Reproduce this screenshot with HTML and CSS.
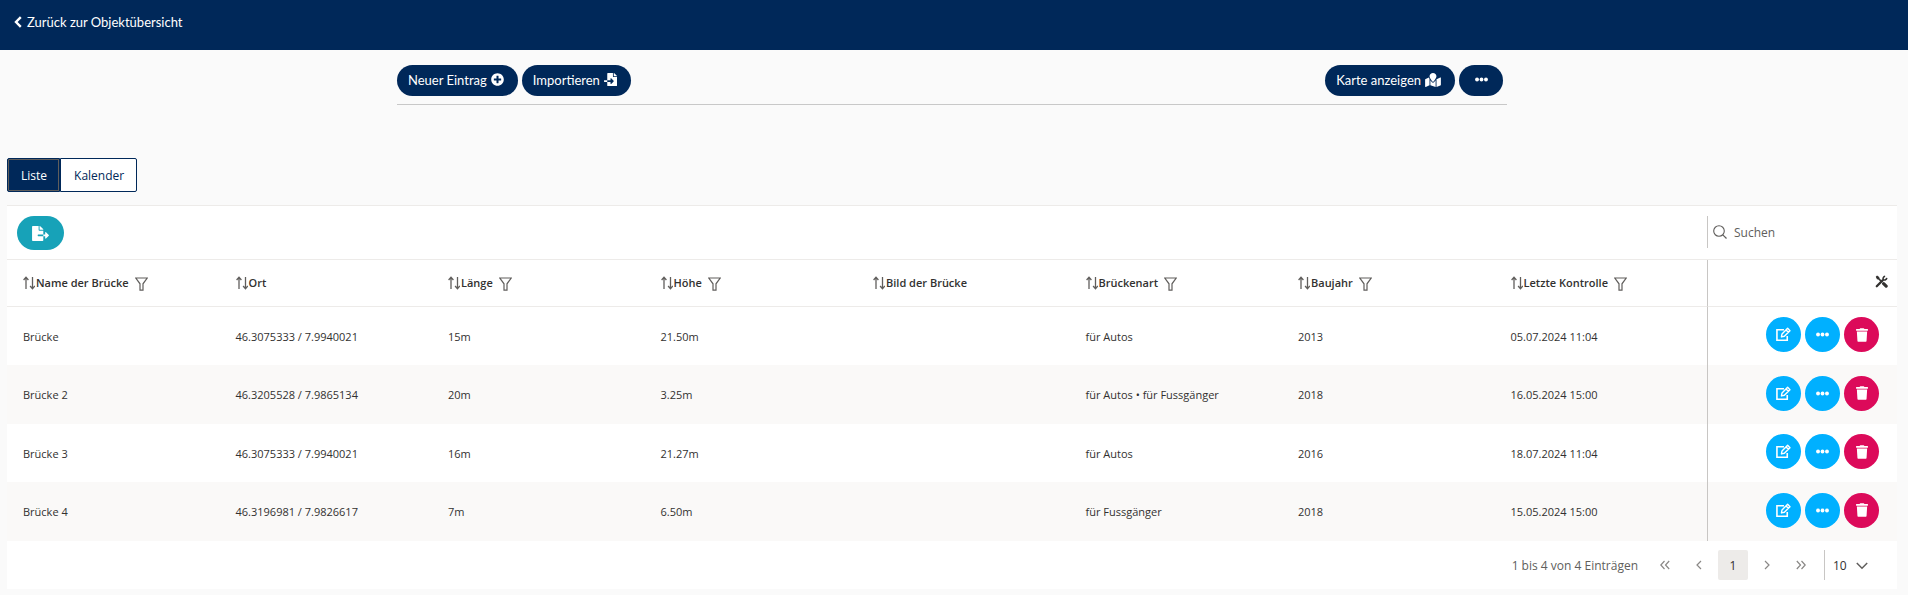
FILE: index.html
```html
<!DOCTYPE html>
<html lang="de">
<head>
<meta charset="utf-8">
<meta name="viewport" content="width=device-width, initial-scale=1">
<title>Brücken</title>
<link rel="stylesheet" href="styles.css">
</head>
<body>
<svg class="sprite" aria-hidden="true">
  <symbol id="i-back" viewBox="0 0 8 12"><path d="M6.8 1.2 2 6l4.800 4.800" fill="none" stroke="currentColor" stroke-width="2.400"/></symbol>
  <symbol id="i-plus" viewBox="0 0 512 512"><path d="M256 8C119 8 8 119 8 256s111 248 248 248 248-111 248-248S393 8 256 8zm144 276c0 6.600-5.400 12-12 12h-92v92c0 6.600-5.400 12-12 12h-56c-6.600 0-12-5.400-12-12v-92h-92c-6.600 0-12-5.400-12-12v-56c0-6.600 5.400-12 12-12h92v-92c0-6.600 5.400-12 12-12h56c6.600 0 12 5.400 12 12v92h92c6.600 0 12 5.400 12 12v56z"/></symbol>
  <symbol id="i-import" viewBox="0 0 512 512"><path d="M16 288c-8.800 0-16 7.200-16 16v32c0 8.800 7.200 16 16 16h112v-64zm489-183L407.100 7c-4.500-4.500-10.600-7-17-7H384v128h128v-6.100c0-6.300-2.500-12.400-7-16.900zm-153 31V0H152c-13.300 0-24 10.700-24 24v264h128v-65.200c0-14.300 17.300-21.400 27.400-11.300L379 308c6.600 6.700 6.600 17.400 0 24l-95.700 96.400c-10.100 10.100-27.400 3-27.400-11.300V352H128v136c0 13.300 10.700 24 24 24h336c13.300 0 24-10.700 24-24V160H376c-13.200 0-24-10.800-24-24z"/></symbol>
  <symbol id="i-export" viewBox="0 0 576 512"><path d="M384 121.900c0-6.300-2.500-12.400-7-16.900L279.100 7c-4.500-4.500-10.600-7-17-7H256v128h128zM571 308l-95.700-96.400c-10.100-10.100-27.400-3-27.400 11.300V288h-64v64h64v65.200c0 14.300 17.300 21.400 27.400 11.300L571 332c6.600-6.600 6.600-17.400 0-24zm-379 28v-32c0-8.800 7.200-16 16-16h176V160H248c-13.200 0-24-10.800-24-24V0H24C10.700 0 0 10.700 0 24v464c0 13.300 10.700 24 24 24h336c13.300 0 24-10.700 24-24V352H208c-8.800 0-16-7.200-16-16z"/></symbol>
  <symbol id="i-map" viewBox="0 0 576 512"><path d="M288 0c-69.590 0-126 56.410-126 126 0 56.260 82.350 158.800 113.900 196.020 6.390 7.540 17.820 7.540 24.200 0C331.650 284.800 414 182.260 414 126 414 56.410 357.590 0 288 0zM20.120 215.950A32 32 0 0 0 0 245.660v250.320c0 11.320 11.430 19.060 21.940 14.860L160 448V214.920c-8.840-15.980-16.070-31.540-21.250-46.420zM288 359.670c-14.070 0-27.380-6.180-36.510-16.960-19.660-23.200-40.570-49.620-59.490-76.720v182l192 64V266c-18.920 27.090-39.820 53.520-59.490 76.720-9.130 10.770-22.440 16.950-36.510 16.950zm266.060-198.510L416 224v288l139.880-55.950A32 32 0 0 0 576 426.340V176.020c0-11.320-11.430-19.060-21.940-14.860z"/></symbol>
  <symbol id="i-dots" viewBox="0 0 512 512"><circle cx="80" cy="256" r="76"/><circle cx="256" cy="256" r="76"/><circle cx="432" cy="256" r="76"/></symbol>
  <symbol id="i-trash" viewBox="0 0 448 512"><path d="M432 32H312l-9.400-18.700A24 24 0 0 0 281.100 0H166.800a23.720 23.720 0 0 0-21.400 13.300L136 32H16A16 16 0 0 0 0 48v32a16 16 0 0 0 16 16h416a16 16 0 0 0 16-16V48a16 16 0 0 0-16-16zM53.200 467a48 48 0 0 0 47.900 45h245.800a48 48 0 0 0 47.900-45L416 128H32z"/></symbol>
  <symbol id="i-edit" viewBox="0 0 16 16"><path d="M8.500 3H1v11.200h11V9.500" fill="none" stroke="currentColor" stroke-width="1.700"/><path d="m5.800 10.600.6-3.200 6-6 2.500 2.500-6 6-3.100.7zM10.700 3.100l2.500 2.500" fill="none" stroke="currentColor" stroke-width="1.500" stroke-linejoin="round"/></symbol>
  <symbol id="i-sort" viewBox="0 0 12 14"><path d="M3 13V1.500M.6 4 3 1.300 5.400 4M9.500 1v11.500M7.100 10l2.400 2.700 2.400-2.700" fill="none" stroke="currentColor" stroke-width="1.300"/></symbol>
  <symbol id="i-filter" viewBox="0 0 13 14"><path d="M.8 1h11.400L8 6.800v6.400H5V6.800z" fill="none" stroke="currentColor" stroke-width="1.200"/></symbol>
  <symbol id="i-search" viewBox="0 0 14 14"><circle cx="6" cy="6" r="5.300" fill="none" stroke="currentColor" stroke-width="1.100"/><path d="m9.800 9.800 3.700 3.700" stroke="currentColor" stroke-width="1.200"/></symbol>
  <symbol id="i-tools" viewBox="0 0 14 14"><path d="M.8 2 2.200.6l2.300 1.500.3 1.500L7 5.800 5.800 7 3.600 4.800l-1.500-.3z"/><path d="m9.300 9.300 2.700 2.700" stroke="currentColor" stroke-width="3.400" stroke-linecap="round"/><path d="m1.900 12.100 6.300-6.300" stroke="currentColor" stroke-width="2.400" stroke-linecap="round"/><path d="M10.900 1.400a2.600 2.600 0 0 0-2 3.700 2.600 2.600 0 0 0 3.800-2" fill="none" stroke="currentColor" stroke-width="1.700"/></symbol>
  <symbol id="i-first" viewBox="0 0 10 10"><path d="M4.500 1 .8 5l3.700 4M9.200 1 5.500 5l3.700 4" fill="none" stroke="currentColor" stroke-width="1.200"/></symbol>
  <symbol id="i-prev" viewBox="0 0 10 10"><path d="M7 1 3 5l4 4" fill="none" stroke="currentColor" stroke-width="1.200"/></symbol>
  <symbol id="i-next" viewBox="0 0 10 10"><path d="m3 1 4 4-4 4" fill="none" stroke="currentColor" stroke-width="1.200"/></symbol>
  <symbol id="i-last" viewBox="0 0 10 10"><path d="m.8 1 3.700 4L.8 9M5.500 1l3.700 4-3.700 4" fill="none" stroke="currentColor" stroke-width="1.200"/></symbol>
  <symbol id="i-down" viewBox="0 0 12 8"><path d="m.8 1 5.200 5.200L11.200 1" fill="none" stroke="currentColor" stroke-width="1.500"/></symbol>
</svg>

<header class="topbar">
  <a class="back" href="#"><svg class="back-icon"><use href="#i-back"/></svg>Zurück zur Objektübersicht</a>
</header>

<main class="page">
  <div class="actions">
    <div class="group">
      <button class="pill" type="button">Neuer Eintrag<svg class="icon"><use href="#i-plus"/></svg></button>
      <button class="pill" type="button">Importieren<svg class="icon"><use href="#i-import"/></svg></button>
    </div>
    <div class="group">
      <button class="pill" type="button">Karte anzeigen<svg class="icon icon-wide"><use href="#i-map"/></svg></button>
      <button class="pill pill-more" type="button" aria-label="Mehr"><svg class="icon"><use href="#i-dots"/></svg></button>
    </div>
  </div>

  <div class="tabs">
    <button class="tab tab-active" type="button">Liste</button>
    <button class="tab" type="button">Kalender</button>
  </div>

  <section class="card">
    <div class="toolbar">
      <button class="export" type="button" aria-label="Exportieren"><svg class="icon-export"><use href="#i-export"/></svg></button>
      <label class="search"><svg class="icon-search"><use href="#i-search"/></svg><input class="search-input" type="text" placeholder="Suchen" aria-label="Suchen"></label>
    </div>

    <table class="grid">
      <colgroup><col><col><col><col><col><col><col><col><col class="col-tools"></colgroup>
      <thead>
        <tr>
          <th><span class="head"><svg class="sort"><use href="#i-sort"/></svg>Name der Brücke<svg class="filter"><use href="#i-filter"/></svg></span></th>
          <th><span class="head"><svg class="sort"><use href="#i-sort"/></svg>Ort</span></th>
          <th><span class="head"><svg class="sort"><use href="#i-sort"/></svg>Länge<svg class="filter"><use href="#i-filter"/></svg></span></th>
          <th><span class="head"><svg class="sort"><use href="#i-sort"/></svg>Höhe<svg class="filter"><use href="#i-filter"/></svg></span></th>
          <th><span class="head"><svg class="sort"><use href="#i-sort"/></svg>Bild der Brücke</span></th>
          <th><span class="head"><svg class="sort"><use href="#i-sort"/></svg>Brückenart<svg class="filter"><use href="#i-filter"/></svg></span></th>
          <th><span class="head"><svg class="sort"><use href="#i-sort"/></svg>Baujahr<svg class="filter"><use href="#i-filter"/></svg></span></th>
          <th><span class="head"><svg class="sort"><use href="#i-sort"/></svg>Letzte Kontrolle<svg class="filter"><use href="#i-filter"/></svg></span></th>
          <th class="pinned pinned-head"><svg class="icon-tools"><use href="#i-tools"/></svg></th>
        </tr>
      </thead>
      <tbody>
        <tr>
          <td>Brücke</td><td>46.3075333 / 7.9940021</td><td>15m</td><td>21.50m</td><td></td><td>für Autos</td><td>2013</td><td>05.07.2024 11:04</td>
          <td class="pinned"><div class="row-actions"><button class="round" type="button" aria-label="Bearbeiten"><svg class="icon-edit"><use href="#i-edit"/></svg></button><button class="round" type="button" aria-label="Mehr"><svg class="icon"><use href="#i-dots"/></svg></button><button class="round round-delete" type="button" aria-label="Löschen"><svg class="icon-trash"><use href="#i-trash"/></svg></button></div></td>
        </tr>
        <tr>
          <td>Brücke 2</td><td>46.3205528 / 7.9865134</td><td>20m</td><td>3.25m</td><td></td><td>für Autos • für Fussgänger</td><td>2018</td><td>16.05.2024 15:00</td>
          <td class="pinned"><div class="row-actions"><button class="round" type="button" aria-label="Bearbeiten"><svg class="icon-edit"><use href="#i-edit"/></svg></button><button class="round" type="button" aria-label="Mehr"><svg class="icon"><use href="#i-dots"/></svg></button><button class="round round-delete" type="button" aria-label="Löschen"><svg class="icon-trash"><use href="#i-trash"/></svg></button></div></td>
        </tr>
        <tr>
          <td>Brücke 3</td><td>46.3075333 / 7.9940021</td><td>16m</td><td>21.27m</td><td></td><td>für Autos</td><td>2016</td><td>18.07.2024 11:04</td>
          <td class="pinned"><div class="row-actions"><button class="round" type="button" aria-label="Bearbeiten"><svg class="icon-edit"><use href="#i-edit"/></svg></button><button class="round" type="button" aria-label="Mehr"><svg class="icon"><use href="#i-dots"/></svg></button><button class="round round-delete" type="button" aria-label="Löschen"><svg class="icon-trash"><use href="#i-trash"/></svg></button></div></td>
        </tr>
        <tr>
          <td>Brücke 4</td><td>46.3196981 / 7.9826617</td><td>7m</td><td>6.50m</td><td></td><td>für Fussgänger</td><td>2018</td><td>15.05.2024 15:00</td>
          <td class="pinned"><div class="row-actions"><button class="round" type="button" aria-label="Bearbeiten"><svg class="icon-edit"><use href="#i-edit"/></svg></button><button class="round" type="button" aria-label="Mehr"><svg class="icon"><use href="#i-dots"/></svg></button><button class="round round-delete" type="button" aria-label="Löschen"><svg class="icon-trash"><use href="#i-trash"/></svg></button></div></td>
        </tr>
      </tbody>
    </table>

    <nav class="pager" aria-label="Seiten">
      <span class="pager-info">1 bis 4 von 4 Einträgen</span>
      <button class="page-btn" type="button" aria-label="Erste Seite"><svg class="icon-page"><use href="#i-first"/></svg></button>
      <button class="page-btn" type="button" aria-label="Vorherige Seite"><svg class="icon-page"><use href="#i-prev"/></svg></button>
      <button class="page-btn page-current" type="button">1</button>
      <button class="page-btn" type="button" aria-label="Nächste Seite"><svg class="icon-page"><use href="#i-next"/></svg></button>
      <button class="page-btn" type="button" aria-label="Letzte Seite"><svg class="icon-page"><use href="#i-last"/></svg></button>
      <div class="page-size">
        <select class="page-select" aria-label="Einträge pro Seite"><option>10</option><option>25</option><option>50</option></select>
        <svg class="icon-down"><use href="#i-down"/></svg>
      </div>
    </nav>
  </section>
</main>
</body>
</html>
```
FILE: styles.css
```css
* { box-sizing: border-box; }

body {
  margin: 0;
  background: #fafafa;
  color: #323130;
  font-family: "Open Sans", "Noto Sans", sans-serif;
  font-size: 12px;
}

button, input, select { font-family: inherit; }
button { border: 0; padding: 0; cursor: pointer; }
svg { display: block; flex: none; fill: currentColor; }

.sprite { position: absolute; width: 0; height: 0; }

.topbar {
  display: flex;
  align-items: flex-start;
  height: 50px;
  padding: 13px 14px;
  background: #002859;
}

.back {
  display: flex;
  align-items: center;
  gap: 5px;
  color: #fff;
  font-family: Lato, sans-serif;
  font-size: 13px;
  line-height: 18px;
  text-decoration: none;
}
.back-icon { width: 8px; height: 12px; }

.page { padding: 15px 11px 7px 7px; }

.actions {
  display: flex;
  justify-content: space-between;
  max-width: 1110px;
  margin: 0 auto;
  padding: 0 4px 8px 0;
  border-bottom: 1px solid #c8c8c8;
}

.group { display: flex; gap: 4px; }

.pill {
  display: flex;
  align-items: center;
  gap: 4px;
  height: 31px;
  padding: 0 14px 2px 11px;
  border-radius: 16px;
  background: #002859;
  color: #fff;
  font-family: Lato, sans-serif;
  font-size: 13px;
}
.pill-more { width: 44px; padding: 0 0 2px; justify-content: center; }

.icon { width: 13px; height: 13px; }
.icon-wide { width: 16px; height: 14px; }

.tabs { display: flex; margin-top: 53px; }

.tab {
  height: 34px;
  padding: 0 12px 0 13px;
  border: 1px solid #002859;
  border-radius: 0 2px 2px 0;
  background: #fff;
  color: #002859;
  font-size: 12px;
}
.tab-active {
  border-radius: 2px 0 0 2px;
  background: #002859;
  color: #fff;
  box-shadow: inset 0 0 0 1px #605e5c;
}

.card {
  margin-top: 13px;
  border-top: 1px solid #edebe9;
  background: #fff;
}

.toolbar {
  display: flex;
  justify-content: space-between;
  padding: 10px 0 9px 10px;
  border-bottom: 1px solid #edebe9;
}

.export {
  display: flex;
  align-items: center;
  justify-content: center;
  width: 47px;
  height: 34px;
  border-radius: 17px;
  background: #17a2b8;
  color: #fff;
}
.icon-export { width: 17px; height: 15px; }

.search {
  display: flex;
  align-items: center;
  gap: 7px;
  width: 190px;
  height: 32px;
  padding-left: 5px;
  border-left: 1px solid #c8c6c4;
  color: #605e5c;
}
.icon-search { width: 14px; height: 14px; }
.search-input {
  flex: 1;
  min-width: 0;
  padding: 0;
  border: 0;
  outline: 0;
  background: transparent;
  font-size: 12px;
}
.search-input::placeholder { color: #605e5c; opacity: 1; }

.grid {
  width: 100%;
  border-collapse: separate;
  border-spacing: 0;
  table-layout: fixed;
}
.col-tools { width: 190px; }

.grid th {
  height: 47px;
  padding: 0 16px 2px;
  border-bottom: 1px solid #edebe9;
  font-size: 11px;
  font-weight: 600;
  text-align: left;
}
.grid td {
  height: 58px;
  padding: 0 16px;
  font-size: 11px;
}
.grid tbody tr:nth-child(even) { background: #faf9f8; }
.grid tbody tr:nth-child(even) td { height: 59px; }

.head { display: flex; align-items: center; white-space: nowrap; }
.sort { width: 12px; height: 14px; margin: 2px 1px 0 0; color: #605e5c; }
.filter { width: 13px; height: 14px; margin: 4px 0 0 6px; color: #605e5c; }

.grid .pinned {
  padding: 0 18px 3px 0;
  border-left: 1px solid #c8c6c4;
}
.grid .pinned-head { padding-right: 9px; }
.icon-tools { width: 13px; height: 13px; margin-left: auto; }

.row-actions { display: flex; justify-content: flex-end; gap: 4px; }

.round {
  display: flex;
  align-items: center;
  justify-content: center;
  width: 35px;
  height: 35px;
  border-radius: 50%;
  background: #00b0ff;
  color: #fff;
}
.round-delete { background: #dc0a5a; }
.icon-edit { width: 15px; height: 15px; }
.icon-trash { width: 12px; height: 14px; }

.pager {
  display: flex;
  align-items: center;
  justify-content: flex-end;
  gap: 4px;
  padding: 9px 19px 9px 0;
  color: #605e5c;
}
.pager-info { margin-right: 8px; font-size: 12px; }

.page-btn {
  display: flex;
  align-items: center;
  justify-content: center;
  width: 30px;
  height: 30px;
  border-radius: 2px;
  background: transparent;
  color: #8a8886;
  font-size: 12px;
}
.page-current { background: #edebe9; color: #323130; }
.icon-page { width: 10px; height: 10px; }

.page-size {
  position: relative;
  display: flex;
  width: 54px;
  height: 30px;
  margin-left: 4px;
  border-left: 1px solid #c8c6c4;
}
.page-select {
  width: 100%;
  padding: 0 0 0 8px;
  border: 0;
  appearance: none;
  background: transparent;
  color: #323130;
  font-size: 12px;
}
.icon-down {
  position: absolute;
  top: 12px;
  right: 10px;
  width: 12px;
  height: 8px;
  pointer-events: none;
}
```
